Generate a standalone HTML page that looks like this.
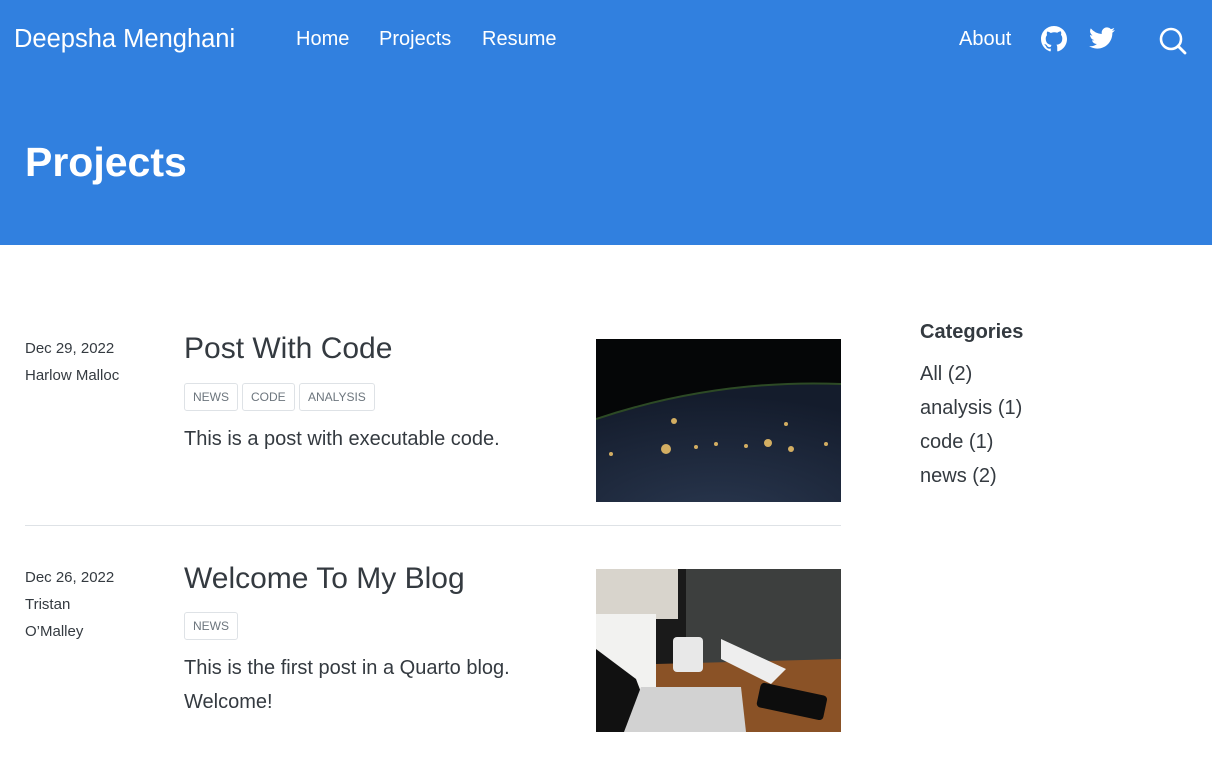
<!DOCTYPE html>
<html><head><meta charset="utf-8"><style>
*{margin:0;padding:0;box-sizing:border-box}
body{width:1212px;height:762px;overflow:hidden;background:#fff;font-family:"Liberation Sans",sans-serif;color:#343a40;position:relative}
.hdr{position:absolute;left:0;top:0;width:1212px;height:245px;background:#3180df}
.a{position:absolute;color:#fff;white-space:nowrap}
.t{position:absolute;white-space:nowrap}
.tag{position:absolute;border:1px solid #dee2e6;border-radius:3px;font-size:12px;color:#6c757d;height:28px;line-height:26px;padding:0 8px}
</style></head><body>
<div class="hdr"></div>
<div class="a" style="left:14px;top:25px;font-size:25.5px">Deepsha Menghani</div>
<div class="a" style="left:296px;top:28px;font-size:20px">Home</div>
<div class="a" style="left:379px;top:28px;font-size:20px">Projects</div>
<div class="a" style="left:482px;top:28px;font-size:20px">Resume</div>
<div class="a" style="left:959px;top:28px;font-size:20px">About</div>
<svg style="position:absolute;left:1041px;top:26px" width="26" height="26" viewBox="0 0 16 16"><path fill="#fff" d="M8 0C3.58 0 0 3.58 0 8c0 3.54 2.290 6.53 5.47 7.59.4.07.55-.17.55-.38v-1.33c-2.230.48-2.700-.96-2.700-.96-.36-.92-.89-1.170-.89-1.170-.73-.5.05-.49.05-.49.8.06 1.230.83 1.230.83.71 1.220 1.870.87 2.330.66.07-.52.28-.87.51-1.070-1.780-.2-3.640-.89-3.640-3.950 0-.87.31-1.590.82-2.150-.08-.2-.36-1.020.08-2.120 0 0 .67-.21 2.200.82A7.5 7.5 0 0 1 8 3.870c.68 0 1.360.09 2 .27 1.530-1.040 2.200-.82 2.200-.82.44 1.100.16 1.920.08 2.120.51.56.82 1.270.82 2.150 0 3.070-1.870 3.750-3.650 3.950.29.25.54.73.54 1.480v2.200c0 .21.15.46.55.38A8 8 0 0 0 16 8c0-4.420-3.580-8-8-8z"/></svg>
<svg style="position:absolute;left:1089px;top:27px" width="26" height="22" viewBox="0 0 16 13"><path fill="#fff" d="M5.03 13c6.04 0 9.34-5 9.34-9.34v-.42A6.7 6.7 0 0 0 16 1.54a6.5 6.5 0 0 1-1.89.52A3.3 3.3 0 0 0 15.56.24a6.6 6.6 0 0 1-2.08.8A3.28 3.28 0 0 0 7.88 4.03 9.3 9.3 0 0 1 1.11.6a3.28 3.28 0 0 0 1.02 4.38A3.3 3.3 0 0 1 .64 4.57v.04A3.28 3.28 0 0 0 3.28 7.83a3.3 3.3 0 0 1-1.48.06 3.29 3.29 0 0 0 3.07 2.28A6.6 6.6 0 0 1 0 11.53 9.3 9.3 0 0 0 5.03 13z"/></svg>
<svg style="position:absolute;left:1158px;top:26px" width="30" height="30" viewBox="0 0 30 30"><circle cx="13" cy="13" r="10" fill="none" stroke="#fff" stroke-width="2.6"/><path d="M20 20l7 7" stroke="#fff" stroke-width="2.8" stroke-linecap="round"/></svg>
<div class="a" style="left:25px;top:139px;font-size:41px;font-weight:bold">Projects</div>

<div class="t" style="left:25px;top:335px;font-size:15px;line-height:27px;color:#343a40">Dec 29, 2022<br>Harlow Malloc</div>
<div class="t" style="left:184px;top:332px;font-size:30px">Post With Code</div>
<div class="tag" style="left:184px;top:383px">NEWS</div>
<div class="tag" style="left:242px;top:383px">CODE</div>
<div class="tag" style="left:299px;top:383px">ANALYSIS</div>
<div class="t" style="left:184px;top:428px;font-size:20px">This is a post with executable code.</div>
<svg style="position:absolute;left:596px;top:339px" width="245" height="163">
<defs><radialGradient id="e" cx="0.5" cy="1.2" r="1.1"><stop offset="0" stop-color="#2a3850"/><stop offset="1" stop-color="#141c2c"/></radialGradient></defs>
<rect width="245" height="163" fill="#050607"/>
<path d="M0 80 Q120 40 245 45 L245 163 L0 163Z" fill="url(#e)"/>
<path d="M0 80 Q120 40 245 45" stroke="#2d4a25" stroke-width="2" fill="none"/>
<g fill="#f3c66a" opacity="0.85"><circle cx="70" cy="110" r="5"/><circle cx="78" cy="82" r="3"/><circle cx="172" cy="104" r="4"/><circle cx="195" cy="110" r="3"/><circle cx="100" cy="108" r="2"/><circle cx="150" cy="107" r="2"/><circle cx="15" cy="115" r="2"/><circle cx="120" cy="105" r="2"/><circle cx="230" cy="105" r="2"/><circle cx="190" cy="85" r="2"/></g></svg>
<div style="position:absolute;left:25px;top:525px;width:816px;height:1px;background:#dee2e6"></div>

<div class="t" style="left:25px;top:564px;font-size:15px;line-height:27px">Dec 26, 2022<br>Tristan<br>O’Malley</div>
<div class="t" style="left:184px;top:562px;font-size:30px">Welcome To My Blog</div>
<div class="tag" style="left:184px;top:612px">NEWS</div>
<div class="t" style="left:184px;top:651px;font-size:20px;line-height:34px">This is the first post in a Quarto blog.<br>Welcome!</div>
<svg style="position:absolute;left:596px;top:569px" width="245" height="163">
<rect width="245" height="163" fill="#1a1a1a"/>
<rect width="82" height="50" fill="#d8d4cc"/>
<rect x="90" width="155" height="95" fill="#3d3f3e"/>
<rect x="0" y="45" width="60" height="118" fill="#f2f2f0"/>
<path d="M60 95 L245 90 L245 163 L60 163Z" fill="#8a5226"/>
<path d="M0 80 L40 110 L60 163 L0 163Z" fill="#111"/>
<path d="M45 118 L145 118 L150 163 L28 163Z" fill="#d2d2d2"/>
<rect x="77" y="68" width="30" height="35" rx="4" fill="#e8e8e8"/>
<path d="M125 70 L190 100 L175 115 L125 90Z" fill="#eee"/>
<rect x="162" y="120" width="68" height="25" rx="4" transform="rotate(12 196 132)" fill="#0d0d0d"/>
</svg>

<div class="t" style="left:920px;top:321px;font-size:20px;font-weight:bold">Categories</div>
<div class="t" style="left:920px;top:357px;font-size:20px;line-height:34px">All (2)<br>analysis (1)<br>code (1)<br>news (2)</div>
</body></html>
